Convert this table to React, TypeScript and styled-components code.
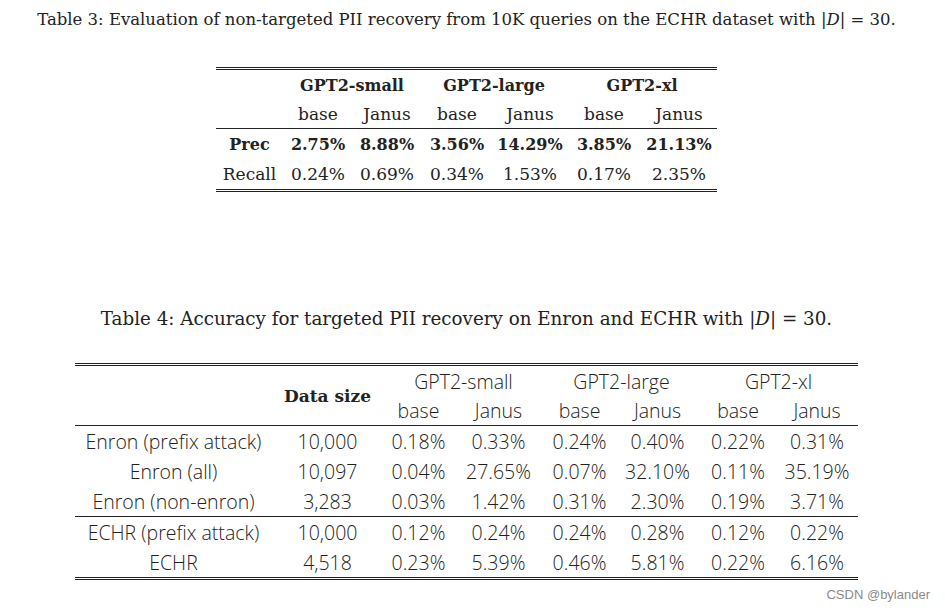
import React from 'react';
import styled, { createGlobalStyle } from 'styled-components';

const GlobalStyle = createGlobalStyle`
  html, body {
    margin: 0;
    padding: 0;
    background: #ffffff;
  }
  body {
    font-family: "DejaVu Serif", "Liberation Serif", serif;
    color: #222;
  }
`;

const Page = styled.div`
  position: relative;
  width: 933px;
  height: 611px;
  display: flex;
  flex-direction: column;
  align-items: center;
  overflow: hidden;
`;

const Caption = styled.div<{ $top: number; $size: number }>`
  margin-top: ${(p) => p.$top}px;
  font-family: "DejaVu Serif", "Liberation Serif", serif;
  font-size: ${(p) => p.$size}px;
  line-height: 24px;
  color: #222;
  white-space: nowrap;
`;

const Math = styled.span`
  font-style: italic;
`;

const SerifTable = styled.table`
  margin-top: 35px;
  border-collapse: collapse;
  table-layout: fixed;
  width: 501px;
  font-family: "DejaVu Serif", "Liberation Serif", serif;
  font-size: 17px;
  color: #222;
  border-top: 3px double #222;
  border-bottom: 3px double #222;
`;

const SansTable = styled.table`
  margin-top: 32px;
  border-collapse: collapse;
  table-layout: fixed;
  width: 782px;
  font-family: "Open Sans", "Noto Sans", sans-serif;
  font-weight: 300;
  font-size: 19.5px;
  color: #222;
  border-top: 3px double #222;
  border-bottom: 3px double #222;
`;

const Cell = styled.td<{ $bold?: boolean; $h?: number }>`
  padding: 0;
  text-align: center;
  white-space: nowrap;
  height: ${(p) => p.$h ?? 29}px;
  font-weight: ${(p) => (p.$bold ? 700 : 'inherit')};
  font-size: ${(p) => (p.$bold ? '16px' : 'inherit')};
`;

const SerifHead = styled.td`
  padding: 0;
  text-align: center;
  white-space: nowrap;
  font-family: "DejaVu Serif", "Liberation Serif", serif;
  font-weight: 700;
  font-size: 17px;
`;

const Row = styled.tr<{ $rule?: boolean }>`
  border-bottom: ${(p) => (p.$rule ? '1px solid #222' : 'none')};
`;

const Watermark = styled.div`
  position: absolute;
  right: 3px;
  bottom: 9px;
  font-family: "Liberation Sans", Arial, sans-serif;
  font-size: 13px;
  color: #8a8a8a;
`;

const t3Cols = [67, 70, 68, 72, 74, 74, 76];
const t4Cols = [196, 112, 70, 90, 72, 84, 77, 81];

const t3Rows = [
  { name: 'Prec', bold: true, values: ['2.75%', '8.88%', '3.56%', '14.29%', '3.85%', '21.13%'] },
  { name: 'Recall', bold: false, values: ['0.24%', '0.69%', '0.34%', '1.53%', '0.17%', '2.35%'] },
];

const t4Rows = [
  { name: 'Enron (prefix attack)', size: '10,000', values: ['0.18%', '0.33%', '0.24%', '0.40%', '0.22%', '0.31%'] },
  { name: 'Enron (all)', size: '10,097', values: ['0.04%', '27.65%', '0.07%', '32.10%', '0.11%', '35.19%'] },
  { name: 'Enron (non-enron)', size: '3,283', values: ['0.03%', '1.42%', '0.31%', '2.30%', '0.19%', '3.71%'], rule: true },
  { name: 'ECHR (prefix attack)', size: '10,000', values: ['0.12%', '0.24%', '0.24%', '0.28%', '0.12%', '0.22%'] },
  { name: 'ECHR', size: '4,518', values: ['0.23%', '5.39%', '0.46%', '5.81%', '0.22%', '6.16%'] },
];

const models = ['GPT2-small', 'GPT2-large', 'GPT2-xl'];

export default function App() {
  return (
    <>
      <GlobalStyle />
      <Page>
        <Caption $top={8} $size={16.5}>
          Table 3: Evaluation of non-targeted PII recovery from 10K queries on the ECHR dataset with |<Math>D</Math>| = 30.
        </Caption>

        <SerifTable>
          <colgroup>
            {t3Cols.map((w, i) => (
              <col key={i} style={{ width: w }} />
            ))}
          </colgroup>
          <tbody>
            <tr>
              <Cell $h={30} />
              {models.map((m) => (
                <Cell key={m} colSpan={2} $bold $h={30}>
                  {m}
                </Cell>
              ))}
            </tr>
            <Row $rule>
              <Cell $h={28} />
              {models.map((m) => (
                <React.Fragment key={m}>
                  <Cell $h={28}>base</Cell>
                  <Cell $h={28}>Janus</Cell>
                </React.Fragment>
              ))}
            </Row>
            {t3Rows.map((r) => (
              <tr key={r.name}>
                <Cell $bold={r.bold} $h={30}>{r.name}</Cell>
                {r.values.map((v, i) => (
                  <Cell key={i} $bold={r.bold} $h={30}>
                    {v}
                  </Cell>
                ))}
              </tr>
            ))}
          </tbody>
        </SerifTable>

        <Caption $top={115} $size={18.3}>
          Table 4: Accuracy for targeted PII recovery on Enron and ECHR with |<Math>D</Math>| = 30.
        </Caption>

        <SansTable>
          <colgroup>
            {t4Cols.map((w, i) => (
              <col key={i} style={{ width: w }} />
            ))}
          </colgroup>
          <tbody>
            <tr>
              <Cell rowSpan={2} />
              <SerifHead rowSpan={2}>Data size</SerifHead>
              {models.map((m) => (
                <Cell key={m} colSpan={2} $h={30}>
                  {m}
                </Cell>
              ))}
            </tr>
            <Row $rule>
              {models.map((m) => (
                <React.Fragment key={m}>
                  <Cell $h={29}>base</Cell>
                  <Cell $h={29}>Janus</Cell>
                </React.Fragment>
              ))}
            </Row>
            {t4Rows.map((r) => (
              <Row key={r.name} $rule={r.rule}>
                <Cell $h={30}>{r.name}</Cell>
                <Cell $h={30}>{r.size}</Cell>
                {r.values.map((v, i) => (
                  <Cell key={i} $h={30}>
                    {v}
                  </Cell>
                ))}
              </Row>
            ))}
          </tbody>
        </SansTable>

        <Watermark>CSDN @bylander</Watermark>
      </Page>
    </>
  );
}
